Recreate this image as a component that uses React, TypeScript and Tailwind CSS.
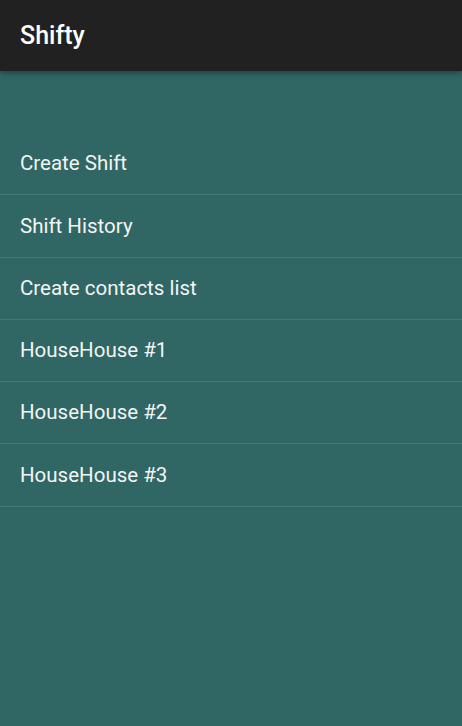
const items = [
  "Create Shift",
  "Shift History",
  "Create contacts list",
  "HouseHouse #1",
  "HouseHouse #2",
  "HouseHouse #3",
];

export default function App() {
  return (
    <div
      className="flex h-[726px] w-[462px] flex-col bg-[#306663]"
      style={{ fontFamily: "Roboto, 'Noto Sans', sans-serif" }}
    >
      <header className="relative z-10 flex h-[71px] shrink-0 items-center bg-[#212121] px-5 shadow-[0_2px_5px_rgba(0,0,0,0.35)]">
        <h1 className="text-[25px] font-medium text-white">Shifty</h1>
      </header>
      <ul className="pt-[62px]">
        {items.map((item) => (
          <li
            key={item}
            className="flex h-[62.3px] items-center border-b border-[#437a77] px-5 text-[20.5px] text-[#f2f5f5]"
          >
            {item}
          </li>
        ))}
      </ul>
    </div>
  );
}
